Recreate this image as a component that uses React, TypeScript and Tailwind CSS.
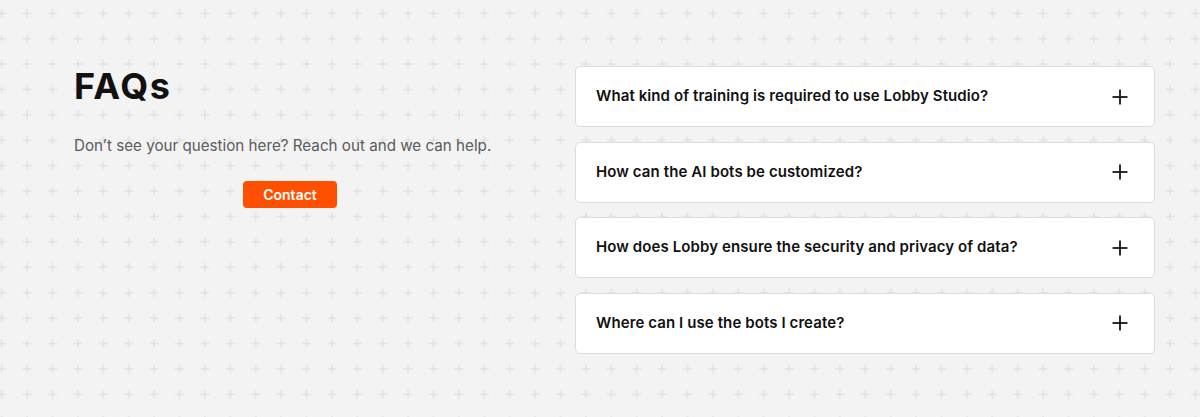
import React from 'react';

const faqs = [
  'What kind of training is required to use Lobby Studio?',
  'How can the AI bots be customized?',
  'How does Lobby ensure the security and privacy of data?',
  'Where can I use the bots I create?',
];

const PlusIcon: React.FC = () => (
  <svg width="16" height="16" viewBox="0 0 16 16" fill="none" stroke="#161616" strokeWidth="1.8">
    <line x1="8" y1="0.5" x2="8" y2="15.5" />
    <line x1="0.5" y1="8" x2="15.5" y2="8" />
  </svg>
);

const Backdrop: React.FC = () => (
  <svg className="absolute inset-0 h-full w-full" aria-hidden="true">
    <defs>
      <pattern id="plus-grid" x="-11" y="0.6" width="25.4" height="25.4" patternUnits="userSpaceOnUse">
        <line x1="12.7" y1="8.2" x2="12.7" y2="17.2" stroke="#d9d9d9" strokeWidth="1" />
        <line x1="8.2" y1="12.7" x2="17.2" y2="12.7" stroke="#d9d9d9" strokeWidth="1" />
      </pattern>
    </defs>
    <rect width="100%" height="100%" fill="url(#plus-grid)" />
  </svg>
);

export default function App() {
  return (
    <div
      className="relative h-[417px] w-full overflow-hidden bg-[#f3f3f3]"
      style={{ fontFamily: 'Inter, "Noto Sans", sans-serif' }}
    >
      <Backdrop />
      <div className="relative flex pt-[66px] pl-[74px] pr-[45px]">
        <div className="flex w-[432px] flex-col">
          <h1 className="-mt-[2px] text-[36px] font-bold leading-[44px] tracking-[1.5px] text-[#111]">FAQs</h1>
          <p className="mt-[26px] text-[15.2px] leading-[24px] text-[#5a5a5a]">
            Don’t see your question here? Reach out and we can help.
          </p>
          <div className="mt-[23px] flex justify-center">
            <button className="h-[27px] w-[94px] rounded-[4px] bg-[#ff5000] text-[14px] font-semibold text-white">
              Contact
            </button>
          </div>
        </div>
        <div className="ml-auto flex w-[580px] flex-col gap-[14.5px]">
          {faqs.map((q) => (
            <div
              key={q}
              className="flex h-[61px] items-center justify-between rounded-[5px] border border-[#dcdcdc] bg-white pl-[20px] pr-[26px]"
            >
              <span className="text-[15px] font-semibold tracking-[0.1px] text-[#111]">{q}</span>
              <PlusIcon />
            </div>
          ))}
        </div>
      </div>
    </div>
  );
}
